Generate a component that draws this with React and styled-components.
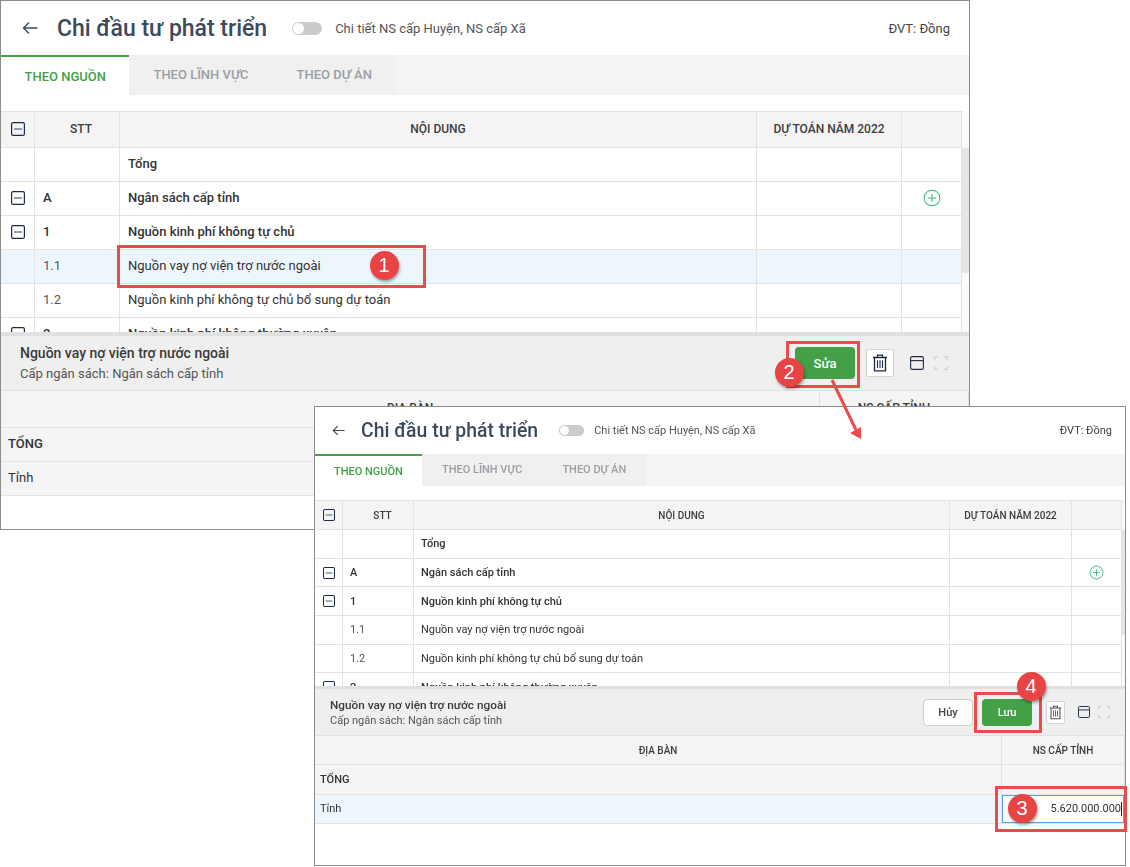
import React from 'react'
import styled, { createGlobalStyle, ThemeProvider } from 'styled-components'

const GlobalStyle = createGlobalStyle`
  html, body { margin: 0; padding: 0; background: #fff; }
  body { font-family: Roboto, "Liberation Sans", sans-serif; color: #333; }
  * { box-sizing: border-box; }
`

const large = {
  left: 0, top: 0, width: 970, height: 530,
  headerH: 54, headerPadL: 21, headerPadR: 19, arrowW: 16, arrowGap: 19, titleSize: 23, titleGap: 25,
  toggleW: 30, toggleH: 13, toggleGap: 13,
  font: 13, headFont: 12, panelFont: 14, tabsH: 40, tabPad: 24, tabActivePad: 23.5, tabsGap: 16,
  tableH: 221, cols: '34px 85px 637px 145px 60px', headH: 37, rowH: 34, cellPad: 8, cellLift: 2, box: 14, plus: 18,
  barW: 7, thumbH: 125,
  panelEdge: 4, panelH: 55, panelPad: 19, panelPadR: 21, subGap: 5, actionGap: 11, winGap: 16, iconGap: 10,
  btnW: 60, btnH: 32, trashW: 28, trashH: 28, icon: 14,
  detailCols: '819px 1fr', detailHead: 37, detailRow: 34, detailPad: 7,
}

const small = {
  left: 314, top: 406, width: 812, height: 460,
  headerH: 47, headerPadL: 17, headerPadR: 13, arrowW: 13, arrowGap: 16, titleSize: 19.4, titleGap: 21,
  toggleW: 25, toggleH: 11, toggleGap: 10,
  font: 11, headFont: 10, panelFont: 11.8, tabsH: 32, tabPad: 20, tabActivePad: 19, tabsGap: 14,
  tableH: 186, cols: '28px 71px 536px 122px 50px', headH: 30, rowH: 28.7, cellPad: 7, cellLift: 0, box: 12, plus: 15,
  barW: 3, thumbH: 105,
  panelEdge: 3, panelH: 47, panelPad: 15, panelPadR: 15, subGap: 2, actionGap: 9, winGap: 13, iconGap: 8,
  btnW: 50, btnH: 27, trashW: 19, trashH: 23, icon: 12,
  detailCols: '687px 1fr', detailHead: 29, detailRow: 29.5, detailPad: 5,
}

const Canvas = styled.div`
  position: relative;
  width: 1130px;
  height: 867px;
  overflow: hidden;
  background: #fff;
`
const Frame = styled.div`
  position: absolute;
  left: ${({ theme }) => theme.left}px;
  top: ${({ theme }) => theme.top}px;
  width: ${({ theme }) => theme.width}px;
  height: ${({ theme }) => theme.height}px;
  border: 1px solid #8c8c8c;
  background: #fff;
  font-size: ${({ theme }) => theme.font}px;
  ${({ $soft }) => $soft && 'filter: blur(0.25px);'}
`
const Header = styled.div`
  display: flex;
  align-items: center;
  height: ${({ theme }) => theme.headerH}px;
  padding: 0 ${({ theme }) => theme.headerPadR}px 0 ${({ theme }) => theme.headerPadL}px;
`
const BackIcon = styled.svg`
  width: ${({ theme }) => theme.arrowW}px;
  height: ${({ theme }) => theme.arrowW}px;
  margin-right: ${({ theme }) => theme.arrowGap}px;
  flex: none;
`
const Title = styled.div`
  font-size: ${({ theme }) => theme.titleSize}px;
  font-weight: 500;
  color: #3c4a5c;
  white-space: nowrap;
  margin-right: ${({ theme }) => theme.titleGap}px;
`
const Toggle = styled.div`
  width: ${({ theme }) => theme.toggleW}px;
  height: ${({ theme }) => theme.toggleH}px;
  border-radius: 7px;
  background: #cbcbcb;
  padding: 1px;
  margin-right: ${({ theme }) => theme.toggleGap}px;
  flex: none;
  &::before {
    content: '';
    display: block;
    height: 100%;
    aspect-ratio: 1;
    border-radius: 50%;
    background: #fff;
  }
`
const ToggleLabel = styled.div`
  color: #555;
  white-space: nowrap;
`
const Unit = styled.div`
  margin-left: auto;
  color: #444;
  white-space: nowrap;
`
const TabBar = styled.div`
  display: flex;
  height: ${({ theme }) => theme.tabsH}px;
  background: #f4f4f4;
  margin-bottom: ${({ theme }) => theme.tabsGap}px;
`
const Tab = styled.div`
  display: flex;
  align-items: center;
  padding: 0 ${({ $active, theme }) => ($active ? theme.tabActivePad : theme.tabPad)}px;
  font-weight: 500;
  white-space: nowrap;
  ${({ $active }) => $active
    ? 'color: #43a047; background: #fff; border-top: 2px solid #43a047;'
    : 'color: #9b9ea3; background: #f0f0f0; padding-bottom: 2px;'}
`
const TableZone = styled.div`
  display: flex;
  height: ${({ theme }) => theme.tableH}px;
  overflow: hidden;
`
const Table = styled.div`
  flex: none;
`
const Row = styled.div`
  display: grid;
  grid-template-columns: ${({ $cols, theme }) => $cols || theme.cols};
  height: ${({ $h }) => $h}px;
  border-bottom: 1px solid #e2e2e2;
  background: ${({ $bg }) => $bg || '#fff'};
`
const HeadRow = styled(Row)`
  border-top: 1px solid #e2e2e2;
  font-size: ${({ theme }) => theme.headFont}px;
  font-weight: 500;
  color: #3d3d3d;
`
const DetailHeadRow = styled(Row)`
  font-size: ${({ theme }) => theme.headFont}px;
  font-weight: 500;
  color: #3d3d3d;
`
const Cell = styled.div`
  display: flex;
  align-items: center;
  justify-content: ${({ $center }) => ($center ? 'center' : 'flex-start')};
  padding: 0 ${({ $pad, theme }) => $pad ?? theme.cellPad}px ${({ theme }) => theme.cellLift}px;
  border-right: 1px solid #e2e2e2;
  font-weight: ${({ $bold }) => ($bold ? 500 : 'inherit')};
  color: ${({ $muted }) => ($muted ? '#4f5966' : 'inherit')};
  white-space: nowrap;
  min-width: 0;
`
const SttHead = styled(Cell)`
  padding-left: 16px;
`
const BoxIcon = styled.svg`
  width: ${({ theme }) => theme.box}px;
  height: ${({ theme }) => theme.box}px;
  flex: none;
`
const PlusIcon = styled.svg`
  width: ${({ theme }) => theme.plus}px;
  height: ${({ theme }) => theme.plus}px;
`
const ScrollBar = styled.div`
  width: ${({ theme }) => theme.barW}px;
  padding-top: ${({ theme }) => theme.headH}px;
  background: #fafafa;
  &::before {
    content: '';
    display: block;
    height: ${({ theme }) => theme.thumbH}px;
    background: #e5e5e5;
  }
`
const Panel = styled.div`
  display: flex;
  align-items: center;
  justify-content: space-between;
  height: ${({ theme }) => theme.panelH + theme.panelEdge}px;
  padding: 0 ${({ theme }) => theme.panelPadR}px 0 ${({ theme }) => theme.panelPad}px;
  background: #efefef;
  border-top: ${({ theme }) => theme.panelEdge}px solid #e0e0e0;
  border-bottom: 1px solid #e2e2e2;
`
const PanelTitle = styled.div`
  font-size: ${({ theme }) => theme.panelFont}px;
  font-weight: 500;
  color: #3a3a3a;
  margin-bottom: ${({ theme }) => theme.subGap}px;
`
const PanelSub = styled.div`
  color: #555;
`
const Actions = styled.div`
  display: flex;
  align-items: center;
`
const Button = styled.button`
  width: ${({ theme }) => theme.btnW}px;
  height: ${({ theme }) => theme.btnH}px;
  margin-right: ${({ theme }) => theme.actionGap}px;
  border-radius: 4px;
  font: 500 ${({ theme }) => theme.font}px Roboto, sans-serif;
  ${({ $primary }) => $primary
    ? 'background: #43a047; color: #fff; border: none;'
    : 'background: #fff; color: #444; border: 1px solid #cfcfcf;'}
`
const TrashButton = styled.div`
  display: flex;
  align-items: center;
  justify-content: center;
  width: ${({ theme }) => theme.trashW}px;
  height: ${({ theme }) => theme.trashH}px;
  margin: 0 ${({ theme }) => theme.winGap}px 0 ${({ $shift }) => $shift || 0}px;
  background: #fff;
  border: 1px solid #d4d4d4;
  border-radius: 2px;
`
const WinIcon = styled.svg`
  width: ${({ theme }) => theme.icon}px;
  height: ${({ theme }) => theme.icon}px;
  flex: none;
  margin-right: ${({ $gap, theme }) => ($gap ? theme.iconGap : 0)}px;
`
const EditBox = styled.div`
  display: flex;
  align-items: center;
  justify-content: flex-end;
  width: 100%;
  height: 28px;
  padding-right: 1px;
  background: #fff;
  border: 1px solid #5aa2e0;
  font-size: 11px;
  &::after {
    content: '';
    width: 1px;
    height: 14px;
    background: #222;
  }
`
const RedBox = styled.div`
  position: absolute;
  left: ${({ $x }) => $x}px;
  top: ${({ $y }) => $y}px;
  width: ${({ $w }) => $w}px;
  height: ${({ $h }) => $h}px;
  border: 3px solid #ea4c4c;
`
const Badge = styled.div`
  position: absolute;
  left: ${({ $x }) => $x - 14.5}px;
  top: ${({ $y }) => $y - 14.5}px;
  width: 29px;
  height: 29px;
  display: flex;
  align-items: center;
  justify-content: center;
  border-radius: 50%;
  background: #e84444;
  color: #fff;
  font: 20px "Liberation Sans", Arial, sans-serif;
  box-shadow: 1px 2px 3px rgba(0, 0, 0, 0.35);
`
const ArrowLayer = styled.svg`
  position: absolute;
  left: 820px;
  top: 370px;
`

const Back = () => (
  <BackIcon viewBox="0 0 16 16" fill="none" stroke="#3c4a5c" strokeWidth="1.4">
    <path d="M1.5 8H15.5M7 2.5L1.5 8L7 13.5" />
  </BackIcon>
)
const Minus = () => (
  <BoxIcon viewBox="0 0 14 14" fill="none">
    <rect x="0.6" y="0.6" width="12.8" height="12.8" rx="1.5" stroke="#1f2b45" strokeWidth="1.2" />
    <path d="M3 7H11" stroke="#77808e" strokeWidth="1.5" />
  </BoxIcon>
)
const Plus = () => (
  <PlusIcon viewBox="0 0 18 18" fill="none" stroke="#3dbb7c" strokeWidth="1.1">
    <circle cx="9" cy="9" r="7.8" />
    <path d="M9 5V13M5 9H13" />
  </PlusIcon>
)
const Trash = ({ color, size }) => (
  <svg width={size} height={size + 2} viewBox="0 0 16 18" fill="none" stroke={color} strokeWidth="1.3">
    <path d="M1 3.5H15M5.5 3.5V1.2H10.5V3.5M2.5 3.5V16.8H13.5V3.5" />
    <path d="M5.5 6.5V14M8 6.5V14M10.5 6.5V14" strokeWidth="1.1" />
  </svg>
)
const Layout = () => (
  <WinIcon $gap viewBox="0 0 14 14" fill="none" stroke="#1f2b45" strokeWidth="1.1">
    <rect x="0.6" y="0.6" width="12.8" height="12.8" rx="1.5" />
    <path d="M0.6 4.6H13.4" />
  </WinIcon>
)
const Expand = () => (
  <WinIcon viewBox="0 0 14 14" fill="none" stroke="#d0d0d0" strokeWidth="1.1">
    <path d="M0.6 4V0.6H4M10 0.6H13.4V4M13.4 10V13.4H10M4 13.4H0.6V10" />
  </WinIcon>
)

const rows = [
  { stt: '', name: 'Tổng', bold: true },
  { stt: 'A', name: 'Ngân sách cấp tỉnh', bold: true, toggle: true, add: true },
  { stt: '1', name: 'Nguồn kinh phí không tự chủ', bold: true, toggle: true },
  { stt: '1.1', name: 'Nguồn vay nợ viện trợ nước ngoài', picked: true },
  { stt: '1.2', name: 'Nguồn kinh phí không tự chủ bổ sung dự toán' },
  { stt: '2', name: 'Nguồn kinh phí không thường xuyên', bold: true, toggle: true },
]

const BudgetWindow = ({ theme, editing }) => (
  <ThemeProvider theme={theme}>
    <Frame $soft={editing}>
      <Header>
        <Back />
        <Title>Chi đầu tư phát triển</Title>
        <Toggle />
        <ToggleLabel>Chi tiết NS cấp Huyện, NS cấp Xã</ToggleLabel>
        <Unit>ĐVT: Đồng</Unit>
      </Header>
      <TabBar>
        <Tab $active>THEO NGUỒN</Tab>
        <Tab>THEO LĨNH VỰC</Tab>
        <Tab>THEO DỰ ÁN</Tab>
      </TabBar>
      <TableZone>
        <Table>
          <HeadRow $h={theme.headH} $bg="#f4f4f4">
            <Cell $center $pad={0}><Minus /></Cell>
            <SttHead $center>STT</SttHead>
            <Cell $center>NỘI DUNG</Cell>
            <Cell $center>DỰ TOÁN NĂM 2022</Cell>
            <Cell />
          </HeadRow>
          {rows.map(row => (
            <Row key={row.name} $h={theme.rowH} $bg={row.picked && !editing ? '#eef6fd' : undefined}>
              <Cell $center $pad={0}>{row.toggle && <Minus />}</Cell>
              <Cell $bold={row.bold} $muted={!row.bold}>{row.stt}</Cell>
              <Cell $bold={row.bold}>{row.name}</Cell>
              <Cell />
              <Cell $center $pad={0}>{row.add && <Plus />}</Cell>
            </Row>
          ))}
        </Table>
        <ScrollBar />
      </TableZone>
      <Panel>
        <div>
          <PanelTitle>Nguồn vay nợ viện trợ nước ngoài</PanelTitle>
          <PanelSub>Cấp ngân sách: Ngân sách cấp tỉnh</PanelSub>
        </div>
        <Actions>
          {editing && <Button>Hủy</Button>}
          <Button $primary>{editing ? 'Lưu' : 'Sửa'}</Button>
          <TrashButton $shift={editing ? 5 : 0}>
            <Trash color={editing ? '#4a5260' : '#1f2b45'} size={editing ? 13 : 16} />
          </TrashButton>
          <Layout />
          <Expand />
        </Actions>
      </Panel>
      <DetailHeadRow $h={theme.detailHead} $bg="#f4f4f4" $cols={theme.detailCols}>
        <Cell $center>ĐỊA BÀN</Cell>
        <Cell $center>NS CẤP TỈNH</Cell>
      </DetailHeadRow>
      <Row $h={theme.detailRow} $bg="#f4f4f4" $cols={theme.detailCols}>
        <Cell $bold $pad={theme.detailPad}>TỔNG</Cell>
        <Cell />
      </Row>
      <Row $h={theme.detailRow} $bg={editing ? '#eef6fd' : '#f4f4f4'} $cols={theme.detailCols}>
        <Cell $pad={theme.detailPad}>Tỉnh</Cell>
        <Cell $pad={0}>{editing && <EditBox>5.620.000.000</EditBox>}</Cell>
      </Row>
    </Frame>
  </ThemeProvider>
)

export default function App() {
  return (
    <Canvas>
      <GlobalStyle />
      <BudgetWindow theme={large} />
      <RedBox $x={117} $y={245} $w={309} $h={43} />
      <Badge $x={384} $y={265}>1</Badge>
      <RedBox $x={786} $y={341} $w={74} $h={47} />
      <Badge $x={789} $y={372}>2</Badge>
      <BudgetWindow theme={small} editing />
      <ArrowLayer width="50" height="75" viewBox="0 0 50 75">
        <path d="M12 10L36 60" stroke="#ea4c4c" strokeWidth="3" fill="none" />
        <path d="M41 69L30 63L41 57Z" fill="#ea4c4c" />
      </ArrowLayer>
      <RedBox $x={974} $y={692} $w={68} $h={41} />
      <Badge $x={1031} $y={686}>4</Badge>
      <RedBox $x={995} $y={786} $w={132} $h={46} />
      <Badge $x={1022} $y={808}>3</Badge>
    </Canvas>
  )
}
